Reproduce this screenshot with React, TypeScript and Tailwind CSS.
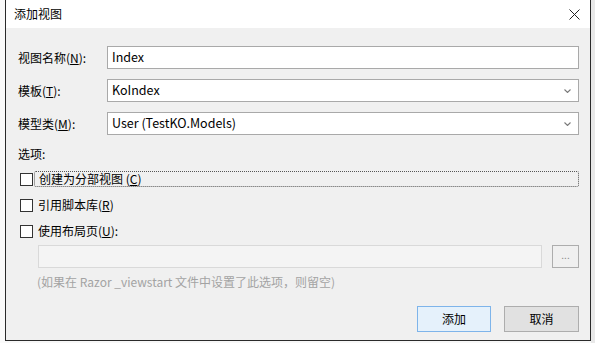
const FONT = "font-['Microsoft_YaHei','Noto_Sans_CJK_SC','Noto_Sans',sans-serif]";

function Chevron() {
  return (
    <svg width="7" height="4" viewBox="0 0 7 4" className="shrink-0">
      <path d="M0.5 0.5 L3.5 3.5 L6.5 0.5" fill="none" stroke="#7a7a7a" strokeWidth="1.1" />
    </svg>
  );
}

function Row({ label, hot, rest, value, select }: { label: string; hot: string; rest: string; value: string; select?: boolean }) {
  return (
    <div className="flex items-center h-[23px]">
      <div className="w-[89px] shrink-0 text-[12px] text-black">
        {label}(<span className="underline">{hot}</span>){rest}
      </div>
      <div className="flex-1 h-full flex items-center justify-between bg-white border border-[#a9a9a9] pl-[4px] pr-[7px] text-[12.5px] text-black">
        <span>{value}</span>
        {select && <Chevron />}
      </div>
    </div>
  );
}

function Check({ label, hot, tail, focused }: { label: string; hot: string; tail?: string; focused?: boolean }) {
  return (
    <div className="flex items-center h-[16px]">
      <div className="w-[13px] h-[13px] bg-white border border-[#333333] shrink-0" />
      <div
        className={`ml-[1px] h-[16px] flex items-center pl-[4px] text-[12px] text-black ${
          focused ? "flex-1 border border-dotted border-[#555555] rounded-[2px]" : ""
        }`}
      >
        {label}(<span className="underline">{hot}</span>){tail}
      </div>
    </div>
  );
}

export default function App() {
  return (
    <div className={`w-[595px] h-[343px] flex bg-[#f7f7f7] ${FONT}`}>
      <div className="w-[5px] shrink-0 bg-[#fafafa]" />
      <div className="w-[586px] h-[341px] flex flex-col border-l border-r border-b border-[#2a2a2a] bg-[#f0f0f0]">
        <div className="h-[28px] shrink-0 bg-white flex items-center justify-between pl-[8px] pr-[10px]">
          <span className="text-[12px] text-black">添加视图</span>
          <svg width="11" height="11" viewBox="0 0 11 11">
            <path d="M0.5 0.5 L10.5 10.5 M10.5 0.5 L0.5 10.5" stroke="#222" strokeWidth="1" fill="none" />
          </svg>
        </div>
        <div className="flex-1 flex flex-col pl-[12px] pr-[11px]">
          <div className="mt-[18px] flex flex-col gap-[10px]">
            <Row label="视图名称" hot="N" rest=":" value="Index" />
            <Row label="模板" hot="T" rest=":" value="KoIndex" select />
            <Row label="模型类" hot="M" rest=":" value="User (TestKO.Models)" select />
          </div>
          <div className="mt-[11px] text-[12px] text-black h-[16px] leading-[16px]">选项:</div>
          <div className="mt-[9px] pl-[2px] flex flex-col gap-[10px]">
            <Check label="创建为分部视图 " hot="C" focused />
            <Check label="引用脚本库" hot="R" />
            <Check label="使用布局页" hot="U" tail=":" />
          </div>
          <div className="mt-[6px] pl-[20px] flex items-center gap-[10px] h-[23px]">
            <div className="flex-1 h-full bg-[#f4f4f4] border border-[#d9d9d9]" />
            <div className="w-[27px] h-full border border-[#adadad] bg-[#f0f0f0] flex items-center justify-center text-[10px] text-[#8a8a8a] leading-none pb-[3px]">
              ...
            </div>
          </div>
          <div className="mt-[5px] pl-[19px] text-[12px] text-[#a3a3a3] h-[17px] leading-[17px]">
            (如果在 Razor _viewstart 文件中设置了此选项，则留空)
          </div>
          <div className="mt-[16px] flex justify-end gap-[13px]">
            <div className="w-[74px] h-[26px] flex items-center justify-center border border-[#7eb4ea] bg-[#e5f1fb] text-[12px] text-black">
              添加
            </div>
            <div className="w-[75px] h-[26px] flex items-center justify-center border border-[#adadad] bg-[#e1e1e1] text-[12px] text-black">
              取消
            </div>
          </div>
        </div>
      </div>
      <div className="w-[4px] shrink-0 bg-[#e8e8e8]" />
    </div>
  );
}
